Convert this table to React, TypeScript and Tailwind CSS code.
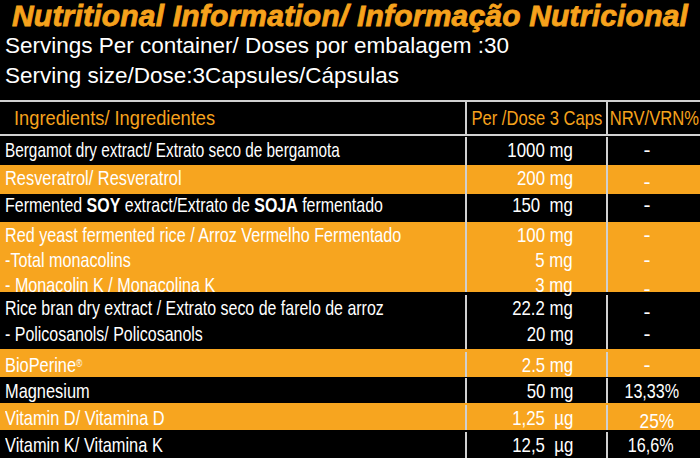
const font = "font-['Liberation_Sans_Narrow','Liberation_Sans',sans-serif]";

type Row = {
  names: React.ReactNode[];
  amounts: string[];
  nrv: string[];
  orange: boolean;
  cls: string;
  squeeze?: string;
};

// "_" marks a dash that sits on the baseline
const rows: Row[] = [
  {
    names: ["Bergamot dry extract/ Extrato seco de bergamota"],
    amounts: ["1000 mg"],
    nrv: ["-"],
    orange: false,
    cls: "h-[29px] pt-[1px] leading-[25px]",
    squeeze: "scale-x-[0.73]",
  },
  {
    names: ["Resveratrol/ Resveratrol"],
    amounts: ["200 mg"],
    nrv: ["_"],
    orange: true,
    cls: "h-[29px] pt-0 leading-[25px]",
  },
  {
    names: [
      <>
        Fermented <b>SOY</b> extract/Extrato de <b>SOJA</b> fermentado
      </>,
    ],
    amounts: ["150  mg"],
    nrv: ["-"],
    orange: false,
    cls: "h-[28px] pt-0 leading-[21px]",
    squeeze: "scale-x-[0.76]",
  },
  {
    names: [
      "Red yeast fermented rice / Arroz Vermelho Fermentado",
      "-Total monacolins",
      "- Monacolin K / Monacolina K",
    ],
    amounts: ["100 mg", "5 mg", "3 mg"],
    nrv: ["-", "-", "_"],
    orange: true,
    cls: "h-[70px] pt-0 leading-[25px]",
    squeeze: "scale-x-[0.77]",
  },
  {
    names: [
      "Rice bran dry extract / Extrato seco de farelo de arroz",
      "- Policosanols/ Policosanols",
    ],
    amounts: ["22.2 mg", "20 mg"],
    nrv: ["_", "-"],
    orange: false,
    cls: "h-[57px] pt-[3px] leading-[26px]",
    squeeze: "scale-x-[0.76]",
  },
  {
    names: [
      <>
        BioPerine<sup className="text-[11px]">®</sup>
      </>,
    ],
    amounts: ["2.5 mg"],
    nrv: ["-"],
    orange: true,
    cls: "h-[28px] pt-[3px] leading-[25px]",
  },
  {
    names: ["Magnesium"],
    amounts: ["50 mg"],
    nrv: ["13,33%"],
    orange: false,
    cls: "h-[26px] pt-[1px] leading-[25px]",
  },
  {
    names: ["Vitamin D/ Vitamina D"],
    amounts: ["1,25  µg"],
    nrv: ["25%"],
    orange: true,
    cls: "h-[27px] pt-[2px] leading-[25px]",
  },
  {
    names: ["Vitamin K/ Vitamina K"],
    amounts: ["12,5  µg"],
    nrv: ["16,6%"],
    orange: false,
    cls: "h-[28px] pt-[2px] leading-[25px]",
  },
];

function Nrv({ value }: { value: string }) {
  if (value === "25%") {
    return (
      <div className="pr-[26px] text-right">
        <span className="relative top-[3px] inline-block origin-right scale-x-[0.82]">
          {value}
        </span>
      </div>
    );
  }
  if (value.includes("%")) {
    return (
      <div className="pr-[26px] text-right">
        <span className="inline-block origin-right scale-x-[0.77]">{value}</span>
      </div>
    );
  }
  return (
    <div className="pr-[14px] text-center">
      <span className={value === "_" ? "relative top-[4px]" : ""}>-</span>
    </div>
  );
}

export default function App() {
  return (
    <div
      className={`w-[700px] h-[458px] overflow-hidden bg-black text-white ${font}`}
    >
      <div className="pl-[12px] pt-[1px] h-[30px] text-[30px] leading-[30px] tracking-[0.2px] font-bold italic text-[#f6a21c] whitespace-nowrap [-webkit-text-stroke:0.8px_#f6a21c]">
        Nutritional Information/ Informação Nutricional
      </div>
      <div className="pl-[5px] h-[30px] text-[22.5px] leading-[32px] whitespace-nowrap">
        Servings Per container/ Doses por embalagem :30
      </div>
      <div className="pl-[5px] h-[40px] text-[22.5px] leading-[32px] whitespace-nowrap">
        Serving size/Dose:3Capsules/Cápsulas
      </div>

      <div className="border-t-2 border-[#d0d0d0]">
        <div className="flex h-[34px] border-b-2 border-[#d0d0d0] text-[21px] text-[#f6a21c] leading-[32px] whitespace-nowrap">
          <div className="w-[465px] shrink-0 pl-[14px]">
            <span className="inline-block origin-left scale-x-[0.87]">
              Ingredients/ Ingredientes
            </span>
          </div>
          <div className="flex w-[141px] min-w-0 shrink-0 justify-center border-l-2 border-[#d0d0d0]">
            <span className="inline-block shrink-0 scale-x-[0.79]">Per /Dose 3 Caps</span>
          </div>
          <div className="flex min-w-0 flex-1 justify-center border-l-2 border-[#d0d0d0]">
            <span className="inline-block shrink-0 scale-x-[0.79]">NRV/VRN%</span>
          </div>
        </div>

        {rows.map((r, i) => (
          <div
            key={i}
            className={`flex text-[21px] whitespace-nowrap ${r.cls} ${
              r.orange ? "bg-[#f7a51f]" : "bg-black"
            }`}
          >
            <div className="w-[465px] shrink-0 pl-[5px]">
              {r.names.map((n, j) => (
                <div key={j}>
                  <span
                    className={`inline-block origin-left ${
                      r.squeeze ?? "scale-x-[0.78]"
                    }`}
                  >
                    {n}
                  </span>
                </div>
              ))}
            </div>
            <div className="w-[141px] shrink-0 border-l-2 border-[#d0d0d0] pr-[33px] text-right">
              {r.amounts.map((a, j) => (
                <div key={j} className="whitespace-pre">
                  <span className="inline-block origin-right scale-x-[0.8]">{a}</span>
                </div>
              ))}
            </div>
            <div className="min-w-0 flex-1 border-l-2 border-[#d0d0d0]">
              {r.nrv.map((n, j) => (
                <Nrv key={j} value={n} />
              ))}
            </div>
          </div>
        ))}
      </div>
    </div>
  );
}
